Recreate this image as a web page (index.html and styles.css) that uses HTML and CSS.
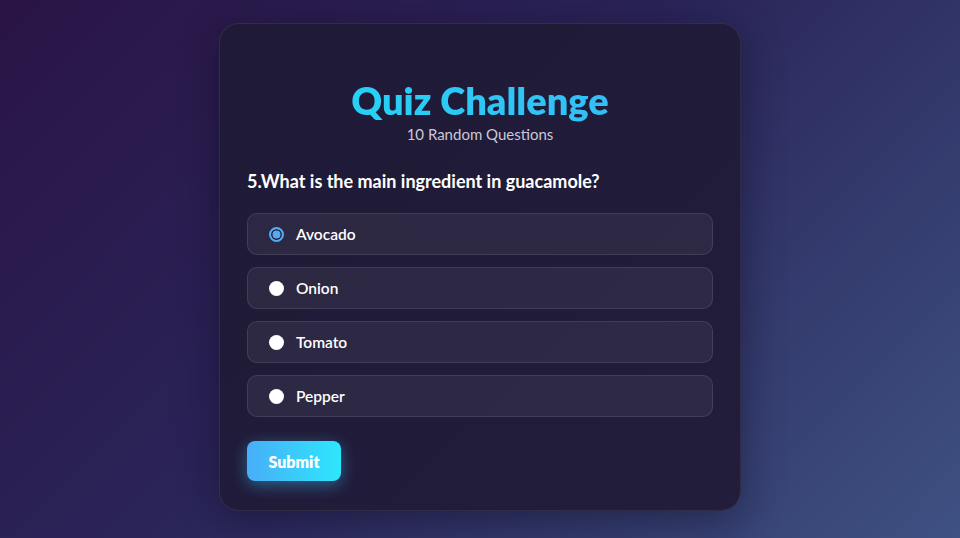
FILE: index.html
```html
<!DOCTYPE html>
<html lang="en">
<head>
<meta charset="utf-8">
<title>Quiz Challenge</title>
<link rel="stylesheet" href="styles.css">
</head>
<body>
<main class="page">
  <section class="card">
    <header class="head">
      <h1 class="title">Quiz Challenge</h1>
      <p class="subtitle">10 Random Questions</p>
    </header>
    <h2 class="question">5.What is the main ingredient in guacamole?</h2>
    <form class="options">
      <label class="option"><input type="radio" name="q" class="radio" checked><span>Avocado</span></label>
      <label class="option"><input type="radio" name="q" class="radio"><span>Onion</span></label>
      <label class="option"><input type="radio" name="q" class="radio"><span>Tomato</span></label>
      <label class="option"><input type="radio" name="q" class="radio"><span>Pepper</span></label>
      <div class="actions"><button type="button" class="submit">Submit</button></div>
    </form>
  </section>
</main>
</body>
</html>
```
FILE: styles.css
```css
* { box-sizing: border-box; }
html, body { margin: 0; padding: 0; }
body {
  height: 538px;
  font-family: "Lato", "Noto Sans", sans-serif;
  background: linear-gradient(135deg, #2a1446 0%, #2a2458 45%, #3e5182 100%);
  color: #fff;
}
.page {
  height: 538px;
  display: flex;
  justify-content: center;
  padding-top: 23px;
}
.card {
  width: 522px;
  height: 488px;
  background: linear-gradient(135deg, #1f1a36 0%, #211d3b 100%);
  border: 1px solid rgba(255,255,255,0.08);
  border-radius: 20px;
  padding: 52px 27px 28px;
  box-shadow: 0 10px 40px rgba(10,8,30,0.45);
}
.head { text-align: center; }
.title {
  margin: 0;
  font-size: 38px;
  font-weight: 800;
  line-height: 48px;
  background: linear-gradient(90deg, #22d8f4, #3ab6f6);
  -webkit-background-clip: text;
  background-clip: text;
  color: transparent;
}
.subtitle {
  margin: 0;
  font-size: 15px;
  line-height: 20px;
  color: #c9c8d8;
}
.question {
  margin: 25px 0 0;
  font-size: 18px;
  font-weight: 700;
  line-height: 24px;
  color: #fff;
}
.options {
  margin-top: 20px;
  display: flex;
  flex-direction: column;
  gap: 12px;
}
.option {
  height: 42px;
  display: flex;
  align-items: center;
  gap: 12px;
  padding-left: 21px;
  background: rgba(255,255,255,0.06);
  border: 1px solid rgba(255,255,255,0.1);
  border-radius: 10px;
  font-size: 15.5px;
  font-weight: 600;
}
.radio {
  appearance: none;
  -webkit-appearance: none;
  margin: 0;
  width: 15px;
  height: 15px;
  border-radius: 50%;
  background: #fff;
}
.radio:checked {
  background: #55aaf2;
  border: 2px solid #55aaf2;
  box-shadow: inset 0 0 0 1.5px #221e3a;
}
.actions { margin-top: 12px; }
.submit {
  width: 94px;
  height: 40px;
  border: none;
  border-radius: 8px;
  background: linear-gradient(90deg, #48aef8, #2ee6fd);
  color: #fff;
  font-family: inherit;
  font-size: 16px;
  font-weight: 800;
  box-shadow: 0 4px 16px rgba(56,189,248,0.45);
}
```
